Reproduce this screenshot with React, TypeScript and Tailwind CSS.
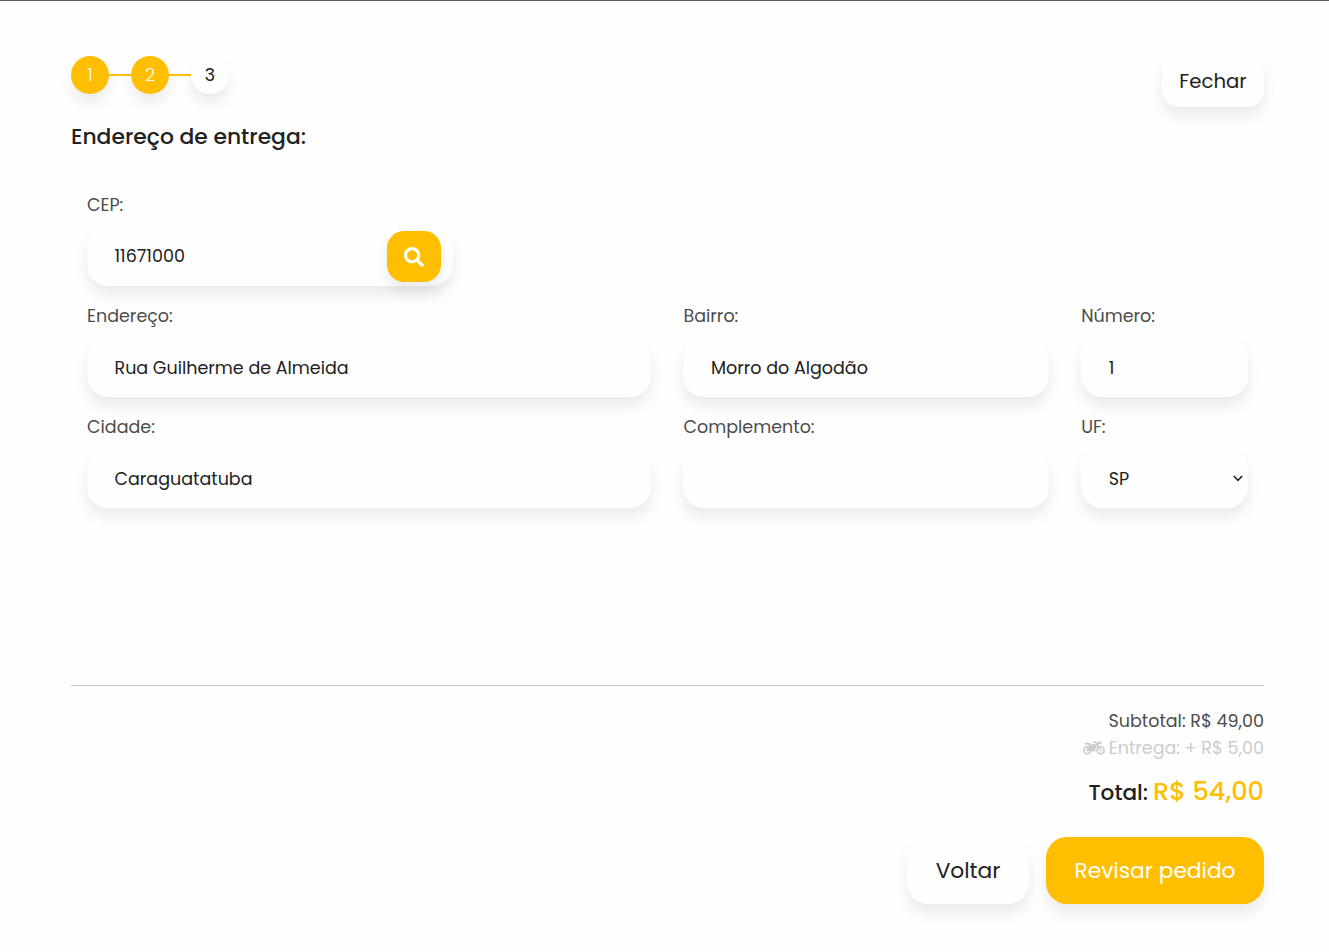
import type { ReactNode } from "react";
import { FaSearch, FaMotorcycle } from "react-icons/fa";

const shadow = "shadow-[0_9px_14px_rgba(0,0,0,0.08)]";

function Field({ span, label, children }: { span: string; label: string; children?: ReactNode }) {
  return (
    <div className={`${span} px-4`}>
      <label className="block h-[27px] leading-[28px] text-[#4c4c4c]">{label}</label>
      <div className={`mt-[7.5px] flex h-[60px] items-center rounded-[21px] bg-[#fefefe] pl-[27.5px] pt-[2px] ${shadow}`}>{children}</div>
    </div>
  );
}

function Step({ n, active }: { n: number; active?: boolean }) {
  return (
    <div className={`flex size-[38px] items-center justify-center rounded-full ${shadow} ${active ? "bg-[#ffbf00] font-light text-white" : "bg-[#fefefe]"}`}>{n}</div>
  );
}

export default function App() {
  return (
    <div className="flex h-[952px] flex-col border-t border-[#5a5a5a] bg-[#fefefe] pl-[71px] pr-[65px] font-['Poppins','Inter',sans-serif] text-[17.5px] text-[#212121]">
      <header className="mt-[55px] flex h-[51px] items-start justify-between">
        <div className="flex items-center">
          <Step n={1} active />
          <div className="h-[2px] w-[22px] bg-[#ffbf00]" />
          <Step n={2} active />
          <div className="h-[2px] w-[22px] bg-[#ffbf00]" />
          <Step n={3} />
        </div>
        <button className={`h-[51px] w-[102px] rounded-[16px] bg-[#fefefe] text-[19.7px] ${shadow}`}>Fechar</button>
      </header>
      <h1 className="mt-[13px] h-[33px] text-[21.85px] font-medium leading-[33px]">Endereço de entrega:</h1>
      <main className="mt-[38px] grid h-[494.5px] grid-cols-12 content-start gap-y-[16.7px] border-b border-[#ccc]">
        <Field span="col-span-4" label="CEP:">
          11671000
          <button aria-label="Buscar CEP" className={`ml-auto mr-[12px] flex h-[51px] w-[54px] items-center justify-center rounded-[17px] bg-[#ffbf00] text-white ${shadow}`}>
            <FaSearch size={20} />
          </button>
        </Field>
        <div className="col-span-8" />
        <Field span="col-span-6" label="Endereço:">Rua Guilherme de Almeida</Field>
        <Field span="col-span-4" label="Bairro:">Morro do Algodão</Field>
        <Field span="col-span-2" label="Número:">1</Field>
        <Field span="col-span-6" label="Cidade:">Caraguatatuba</Field>
        <Field span="col-span-4" label="Complemento:" />
        <Field span="col-span-2" label="UF:">
          SP
          <svg className="ml-auto mr-[5px]" width="10" height="7" viewBox="0 0 10 7" fill="none" stroke="#212121" strokeWidth="1.6">
            <path d="M0.8 1L5 5.3L9.2 1" />
          </svg>
        </Field>
      </main>
      <footer className="flex flex-col items-end">
        <div className="mt-[22px] h-[27px] leading-[27px] text-[#4c4c4c]">Subtotal: R$ 49,00</div>
        <div className="flex h-[27px] items-center gap-[4px] leading-[27px] text-[#cccccc]">
          <FaMotorcycle size={22} />
          <span>Entrega: + R$ 5,00</span>
        </div>
        <div className="mt-[9.5px] flex h-[40px] items-baseline gap-[5px] font-medium leading-[40px]">
          <span className="text-[21.6px]">Total:</span>
          <span className="text-[25.6px] text-[#ffbf00]">R$ 54,00</span>
        </div>
        <div className="mt-[26px] flex gap-[17px] text-[21.75px]">
          <button className={`h-[67px] w-[122px] rounded-[21px] bg-[#fefefe] pt-[2px] ${shadow}`}>Voltar</button>
          <button className={`h-[67px] w-[218px] rounded-[21px] bg-[#ffbf00] pt-[2px] text-white ${shadow}`}>Revisar pedido</button>
        </div>
      </footer>
    </div>
  );
}
